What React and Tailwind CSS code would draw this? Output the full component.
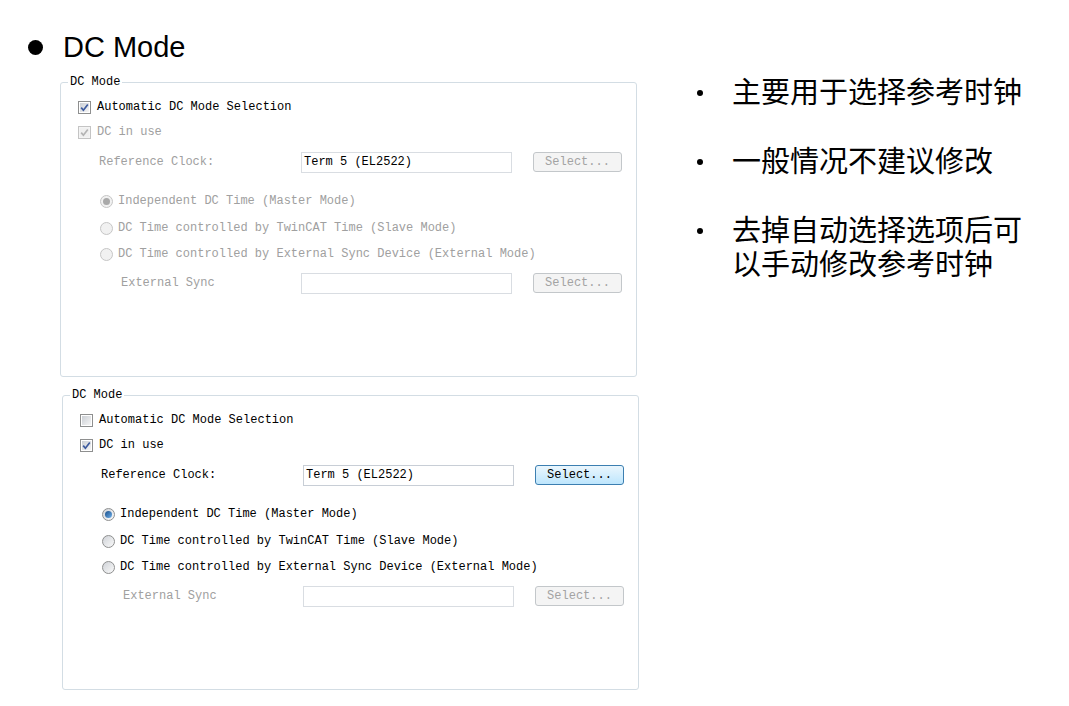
import React from 'react';

const mono = { fontFamily: '"Liberation Mono", "DejaVu Sans Mono", monospace' };

function CheckBox({ checked, disabled }) {
  return (
    <div
      className={`w-[13px] h-[13px] shrink-0 border p-[1px] ${disabled ? 'border-[#c4c4c4] bg-[#f4f4f4]' : 'border-[#8e8f8f] bg-white'}`}
    >
      <div
        className={`w-full h-full flex items-center justify-center ${disabled ? 'bg-[#f0f0f0]' : 'bg-gradient-to-br from-[#cbcfd5] to-[#f6f6f6]'}`}
      >
        {checked && (
          <svg width="9" height="9" viewBox="0 0 9 9">
            <path
              d="M1.2 4.6 L3.4 7.2 L7.8 1.4"
              fill="none"
              stroke={disabled ? '#b4b4b4' : '#3c5a9e'}
              strokeWidth="1.7"
            />
          </svg>
        )}
      </div>
    </div>
  );
}

function Radio({ checked, disabled }) {
  return (
    <div
      className={`w-[13px] h-[13px] shrink-0 rounded-full border flex items-center justify-center ${disabled ? 'border-[#c6c6c6] bg-[#f1f1f1]' : 'border-[#8e8f8f] bg-gradient-to-br from-[#d0d3d8] to-[#fafafa]'}`}
    >
      {checked && (
        <div
          className={`w-[7px] h-[7px] rounded-full ${disabled ? 'bg-[#a9a9a9]' : 'bg-gradient-to-br from-[#194f8a] to-[#6fb0ea]'}`}
        />
      )}
    </div>
  );
}

function Button({ disabled }) {
  return (
    <div
      className={`w-[89px] h-[20px] rounded-[3px] border flex items-center justify-center ${disabled ? 'border-[#c3c7ca] bg-[#f4f4f4] text-[#a3a3a3]' : 'border-[#3c7fb1] bg-gradient-to-b from-[#eaf6fd] to-[#bee6fd] text-black'}`}
    >
      Select...
    </div>
  );
}

function Input({ value, disabled }) {
  return (
    <div
      className={`w-[211px] h-[21px] border bg-white px-[2px] flex items-center ${disabled ? 'border-[#d9dde2]' : 'border-[#c8ced6]'}`}
    >
      {value}
    </div>
  );
}

function DcGroup({ auto }) {
  const on = !auto;
  const txt = on ? 'text-black' : 'text-[#a0a0a0]';
  return (
    <fieldset className="w-[577px] border border-[#d3dde4] rounded-[3px] bg-white">
      <legend className="ml-[7px] px-[2px] text-[12px] leading-[14px] text-black">DC Mode</legend>
      <div className="h-[287px] pl-[17px] text-[12px]">
        <div className="pt-[8px] h-[28px] flex items-center gap-[6px] text-black">
          <CheckBox checked={auto} />
          <span>Automatic DC Mode Selection</span>
        </div>
        <div className={`mt-[5px] h-[20px] flex items-center gap-[6px] ${txt}`}>
          <CheckBox checked disabled={auto} />
          <span>DC in use</span>
        </div>
        <div className={`mt-[9px] h-[22px] flex items-center pl-[21px] ${txt}`}>
          <span className="w-[202px]">Reference Clock:</span>
          <div className="text-black">
            <Input value="Term 5 (EL2522)" disabled={auto} />
          </div>
          <div className="ml-[21px]">
            <Button disabled={auto} />
          </div>
        </div>
        <div className={`mt-[18px] h-[20px] flex items-center gap-[5px] pl-[22px] ${txt}`}>
          <Radio checked disabled={auto} />
          <span>Independent DC Time (Master Mode)</span>
        </div>
        <div className={`mt-[7px] h-[20px] flex items-center gap-[5px] pl-[22px] ${txt}`}>
          <Radio disabled={auto} />
          <span>DC Time controlled by TwinCAT Time (Slave Mode)</span>
        </div>
        <div className={`mt-[6px] h-[20px] flex items-center gap-[5px] pl-[22px] ${txt}`}>
          <Radio disabled={auto} />
          <span>DC Time controlled by External Sync Device (External Mode)</span>
        </div>
        <div className="mt-[8px] h-[22px] flex items-center pl-[43px] text-[#a0a0a0]">
          <span className="w-[180px]">External Sync</span>
          <Input value="" disabled />
          <div className="ml-[21px]">
            <Button disabled />
          </div>
        </div>
      </div>
    </fieldset>
  );
}

function Note({ lines }) {
  return (
    <div className="flex">
      <div className="w-[35px] h-[34px] flex items-center">
        <div className="w-[6px] h-[6px] rounded-full bg-black" />
      </div>
      <div className="text-[29px] leading-[34px] text-black">
        {lines.map((l) => (
          <div key={l}>{l}</div>
        ))}
      </div>
    </div>
  );
}

export default function App() {
  return (
    <div className="w-[1069px] h-[706px] bg-white flex overflow-hidden">
      <div className="w-[638px] shrink-0 pt-[30px]" style={mono}>
        <div
          className="ml-[28px] h-[34px] flex items-center"
          style={{ fontFamily: '"Liberation Sans", Arial, sans-serif' }}
        >
          <div className="w-[15px] h-[15px] rounded-full bg-black" />
          <span className="ml-[20px] text-[29px] leading-[34px] text-black">DC Mode</span>
        </div>
        <div className="ml-[60px] mt-[11px]">
          <DcGroup auto />
        </div>
        <div className="ml-[62px] mt-[11px]">
          <DcGroup auto={false} />
        </div>
      </div>
      <div
        className="ml-[59px] pt-[76px] flex flex-col gap-[35px]"
        style={{ fontFamily: '"Liberation Sans", "Noto Sans CJK SC", sans-serif' }}
      >
        <Note lines={['主要用于选择参考时钟']} />
        <Note lines={['一般情况不建议修改']} />
        <Note lines={['去掉自动选择选项后可', '以手动修改参考时钟']} />
      </div>
    </div>
  );
}
